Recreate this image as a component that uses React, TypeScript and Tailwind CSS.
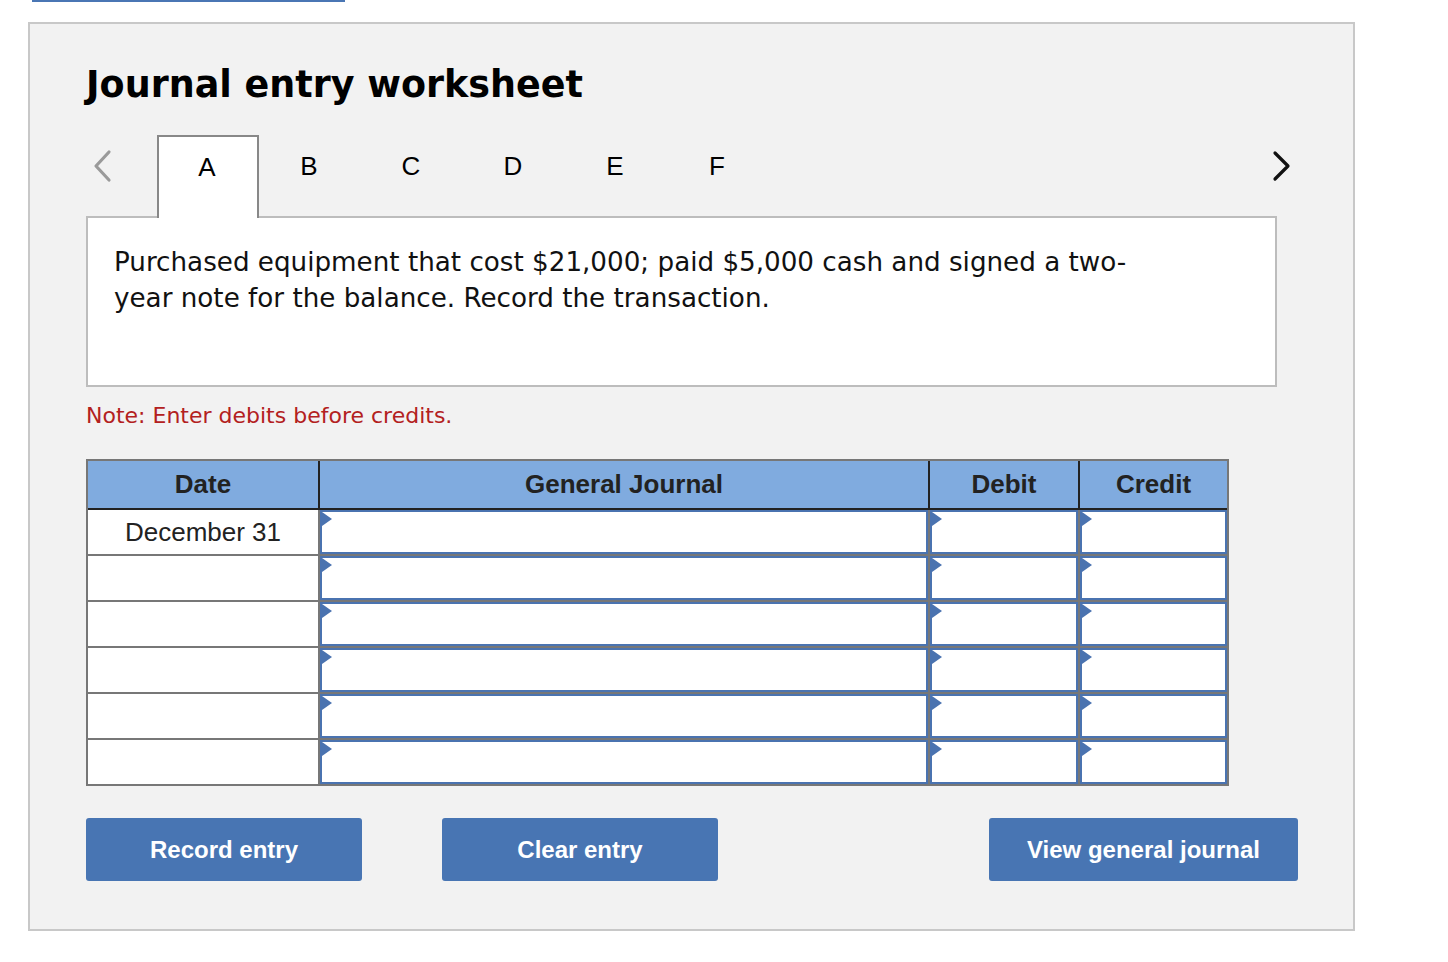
import React from "react";

const tabs = ["A", "B", "C", "D", "E", "F"];
const rows = ["December 31", "", "", "", "", ""];

function EntryCell() {
  return (
    <div className="relative h-[44px] bg-white border-2 border-[#4a73b0]">
      <svg
        className="absolute left-0 top-0"
        width="10"
        height="15"
        viewBox="0 0 10 15"
      >
        <polygon points="0,0 10,7 0,14" fill="#4a73b0" />
      </svg>
    </div>
  );
}

export default function App() {
  return (
    <div className="min-h-[962px] bg-white" style={{ fontFamily: '"DejaVu Sans", Verdana, sans-serif' }}>
      <div className="ml-[32px] h-[2px] w-[313px] bg-[#4a76b4]" />
      <div className="ml-[28px] mt-[20px] w-[1327px] border-2 border-[#c8c8c8] bg-[#f2f2f2] pl-[56px] pr-[55px] pt-[34px] pb-[48px]">
        <h1 className="text-[36.5px] font-bold leading-[54px] text-black">Journal entry worksheet</h1>

        {/* tab strip */}
        <div className="mt-[23px] flex h-[81px] items-stretch">
          <div className="flex w-[71px] items-center pb-[20px] pl-[5px]">
            <svg width="22" height="34" viewBox="0 0 22 34">
              <polyline points="18,3 5,17 18,31" fill="none" stroke="#9a9a9a" strokeWidth="3.2" strokeLinecap="round" strokeLinejoin="round" />
            </svg>
          </div>
          {tabs.map((t, i) => (
            <div
              key={t}
              className={
                i === 0
                  ? "relative z-10 -mb-[2px] flex w-[102px] items-center justify-center border-2 border-b-0 border-[#888] bg-white pb-[20px] pr-[2px] text-[26px] text-black"
                  : "flex w-[102px] items-center justify-center pb-[18px] pr-[2px] text-[26px] text-black"
              }
              style={{ fontFamily: '"Liberation Sans", Arial, sans-serif' }}
            >
              {t}
            </div>
          ))}
          <div className="flex-1" />
          <div className="flex items-center justify-end pb-[20px] pr-[5px]">
            <svg width="22" height="34" viewBox="0 0 22 34">
              <polyline points="4,4 17,17 4,30" fill="none" stroke="#111" strokeWidth="3.2" strokeLinecap="round" strokeLinejoin="round" />
            </svg>
          </div>
        </div>

        {/* question box */}
        <div className="h-[171px] w-[1191px] border-2 border-[#bdbdbd] bg-white pl-[26px] pt-[26px]">
          <p className="max-w-[1040px] text-[26.2px] leading-[36px] text-[#111]">
            Purchased equipment that cost $21,000; paid $5,000 cash and signed a two-year note for the balance. Record the transaction.
          </p>
        </div>

        <p className="mt-[15px] text-[22px] leading-[28px] text-[#b32020]">Note: Enter debits before credits.</p>

        {/* journal grid */}
        <div
          className="mt-[29px] w-[1143px] border-2 border-[#777]"
          style={{ fontFamily: '"Liberation Sans", Arial, sans-serif' }}
        >
          <div className="grid grid-cols-[230px_608px_148px_147px] gap-x-[2px] border-b-2 border-[#222] bg-[#222]">
            {["Date", "General Journal", "Debit", "Credit"].map((h) => (
              <div key={h} className="flex h-[47px] items-center justify-center bg-[#80abdf] text-[26px] font-bold text-[#222]">
                {h}
              </div>
            ))}
          </div>
          <div className="grid grid-cols-[230px_608px_148px_147px] gap-[2px] bg-[#777]">
            {rows.map((d, r) => (
              <React.Fragment key={r}>
                <div className="flex h-[44px] items-center justify-center bg-white text-[26px] text-[#222]">{d}</div>
                <EntryCell />
                <EntryCell />
                <EntryCell />
              </React.Fragment>
            ))}
          </div>
        </div>

        {/* actions */}
        <div
          className="mt-[32px] flex items-center text-[24px] font-bold text-white"
          style={{ fontFamily: '"Liberation Sans", Arial, sans-serif' }}
        >
          <button className="h-[63px] w-[276px] rounded-[3px] bg-[#4875b3]">Record entry</button>
          <button className="ml-[80px] h-[63px] w-[276px] rounded-[3px] bg-[#4875b3]">Clear entry</button>
          <div className="flex-1" />
          <button className="h-[63px] w-[309px] rounded-[3px] bg-[#4875b3]">View general journal</button>
        </div>
      </div>
    </div>
  );
}
